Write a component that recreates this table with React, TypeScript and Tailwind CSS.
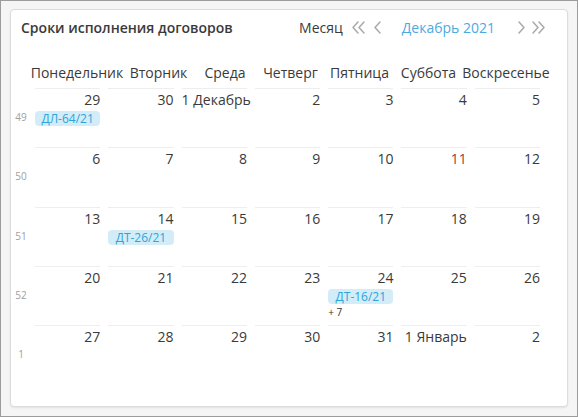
import type { ReactNode } from 'react'

type Day = { label: string; red?: boolean; event?: string; more?: string }

const WEEKS: { num: string; days: Day[] }[] = [
  {
    num: '49',
    days: [
      { label: '29', event: 'ДЛ-64/21' },
      { label: '30' },
      { label: '1 Декабрь' },
      { label: '2' },
      { label: '3' },
      { label: '4' },
      { label: '5' }
    ]
  },
  {
    num: '50',
    days: [
      { label: '6' },
      { label: '7' },
      { label: '8' },
      { label: '9' },
      { label: '10' },
      { label: '11', red: true },
      { label: '12' }
    ]
  },
  {
    num: '51',
    days: [
      { label: '13' },
      { label: '14', event: 'ДТ-26/21' },
      { label: '15' },
      { label: '16' },
      { label: '17' },
      { label: '18' },
      { label: '19' }
    ]
  },
  {
    num: '52',
    days: [
      { label: '20' },
      { label: '21' },
      { label: '22' },
      { label: '23' },
      { label: '24', event: 'ДТ-16/21', more: '+ 7' },
      { label: '25' },
      { label: '26' }
    ]
  },
  {
    num: '1',
    days: [
      { label: '27' },
      { label: '28' },
      { label: '29' },
      { label: '30' },
      { label: '31' },
      { label: '1 Январь' },
      { label: '2' }
    ]
  }
]

const WEEKDAYS = ['Понедельник', 'Вторник', 'Среда', 'Четверг', 'Пятница', 'Суббота', 'Воскресенье']

function Arrow({ dir, double }: { dir: 'left' | 'right'; double?: boolean }): ReactNode {
  const one = dir === 'left' ? 'M6 1 L1 6.5 L6 12' : 'M1 1 L6 6.5 L1 12'
  const two = dir === 'left' ? 'M12 1 L7 6.5 L12 12' : 'M7 1 L12 6.5 L7 12'
  return (
    <svg width={double ? 14 : 8} height="13" viewBox={double ? '0 0 14 13' : '0 0 8 13'} fill="none">
      <path d={one} stroke="#a9a9a9" strokeWidth="1.5" strokeLinecap="round" strokeLinejoin="round" />
      {double && <path d={two} stroke="#a9a9a9" strokeWidth="1.5" strokeLinecap="round" strokeLinejoin="round" />}
    </svg>
  )
}

export default function App(): ReactNode {
  return (
    <div
      className="h-[417px] w-[578px] border border-[#9c9c9c] bg-[#f5f5f5] pl-[9px] pr-[9px] pt-[8px] pb-[9px] text-[#333]"
      style={{ fontFamily: '"Open Sans", "Noto Sans", sans-serif' }}
    >
      <div className="h-full rounded-[4px] border border-[#dcdcdc] bg-white shadow-[0_1px_2px_rgba(0,0,0,0.08)]">
        <div className="flex h-[34px] items-center justify-between pl-[10px] pr-[21px]">
          <div className="text-[14px] font-semibold text-[#3a3a3a]">Сроки исполнения договоров</div>
          <div className="flex items-center text-[14px]">
            <span className="mr-[9px] text-[#3a3a3a]">Месяц</span>
            <Arrow dir="left" double />
            <span className="ml-[8px]">
              <Arrow dir="left" />
            </span>
            <span className="ml-[20px] text-[#4ea9df]">Декабрь 2021</span>
            <span className="ml-[23px]">
              <Arrow dir="right" />
            </span>
            <span className="ml-[6px]">
              <Arrow dir="right" double />
            </span>
          </div>
        </div>

        <div className="mt-[16px] grid h-[24px] grid-cols-[16px_100px_63px_70px_61px_77px_61px_94px] items-center text-[14px] text-[#3a3a3a]">
          <div />
          {WEEKDAYS.map((d) => (
            <div key={d} className="text-center whitespace-nowrap">
              {d}
            </div>
          ))}
        </div>

        <div className="mt-[4px] grid grid-cols-[20px_repeat(7,73.3px)]">
          {WEEKS.map((w) => (
            <div key={w.num} className="contents">
              <div className="flex h-[59.25px] items-center justify-center text-[10px] text-[#a0a0a0]">{w.num}</div>
              {w.days.map((d, i) => (
                <div key={i} className="mx-[4px] h-[59.25px] border-t border-[#eeeeee]">
                  <div
                    className={`whitespace-nowrap pt-[1px] text-right text-[14px] leading-[20px] ${
                      d.red ? 'text-[#9a3b3b]' : 'text-[#3a3a3a]'
                    }`}
                  >
                    {d.label}
                  </div>
                  {d.event && (
                    <div className="mt-[1px] rounded-[4px] bg-[#d3edf8] text-center text-[12px] leading-[15px] text-[#2ea3dc]">
                      {d.event}
                    </div>
                  )}
                  {d.more && <div className="mt-[1px] text-[10px] leading-[14px] text-[#333]">{d.more}</div>}
                </div>
              ))}
            </div>
          ))}
        </div>
      </div>
    </div>
  )
}
